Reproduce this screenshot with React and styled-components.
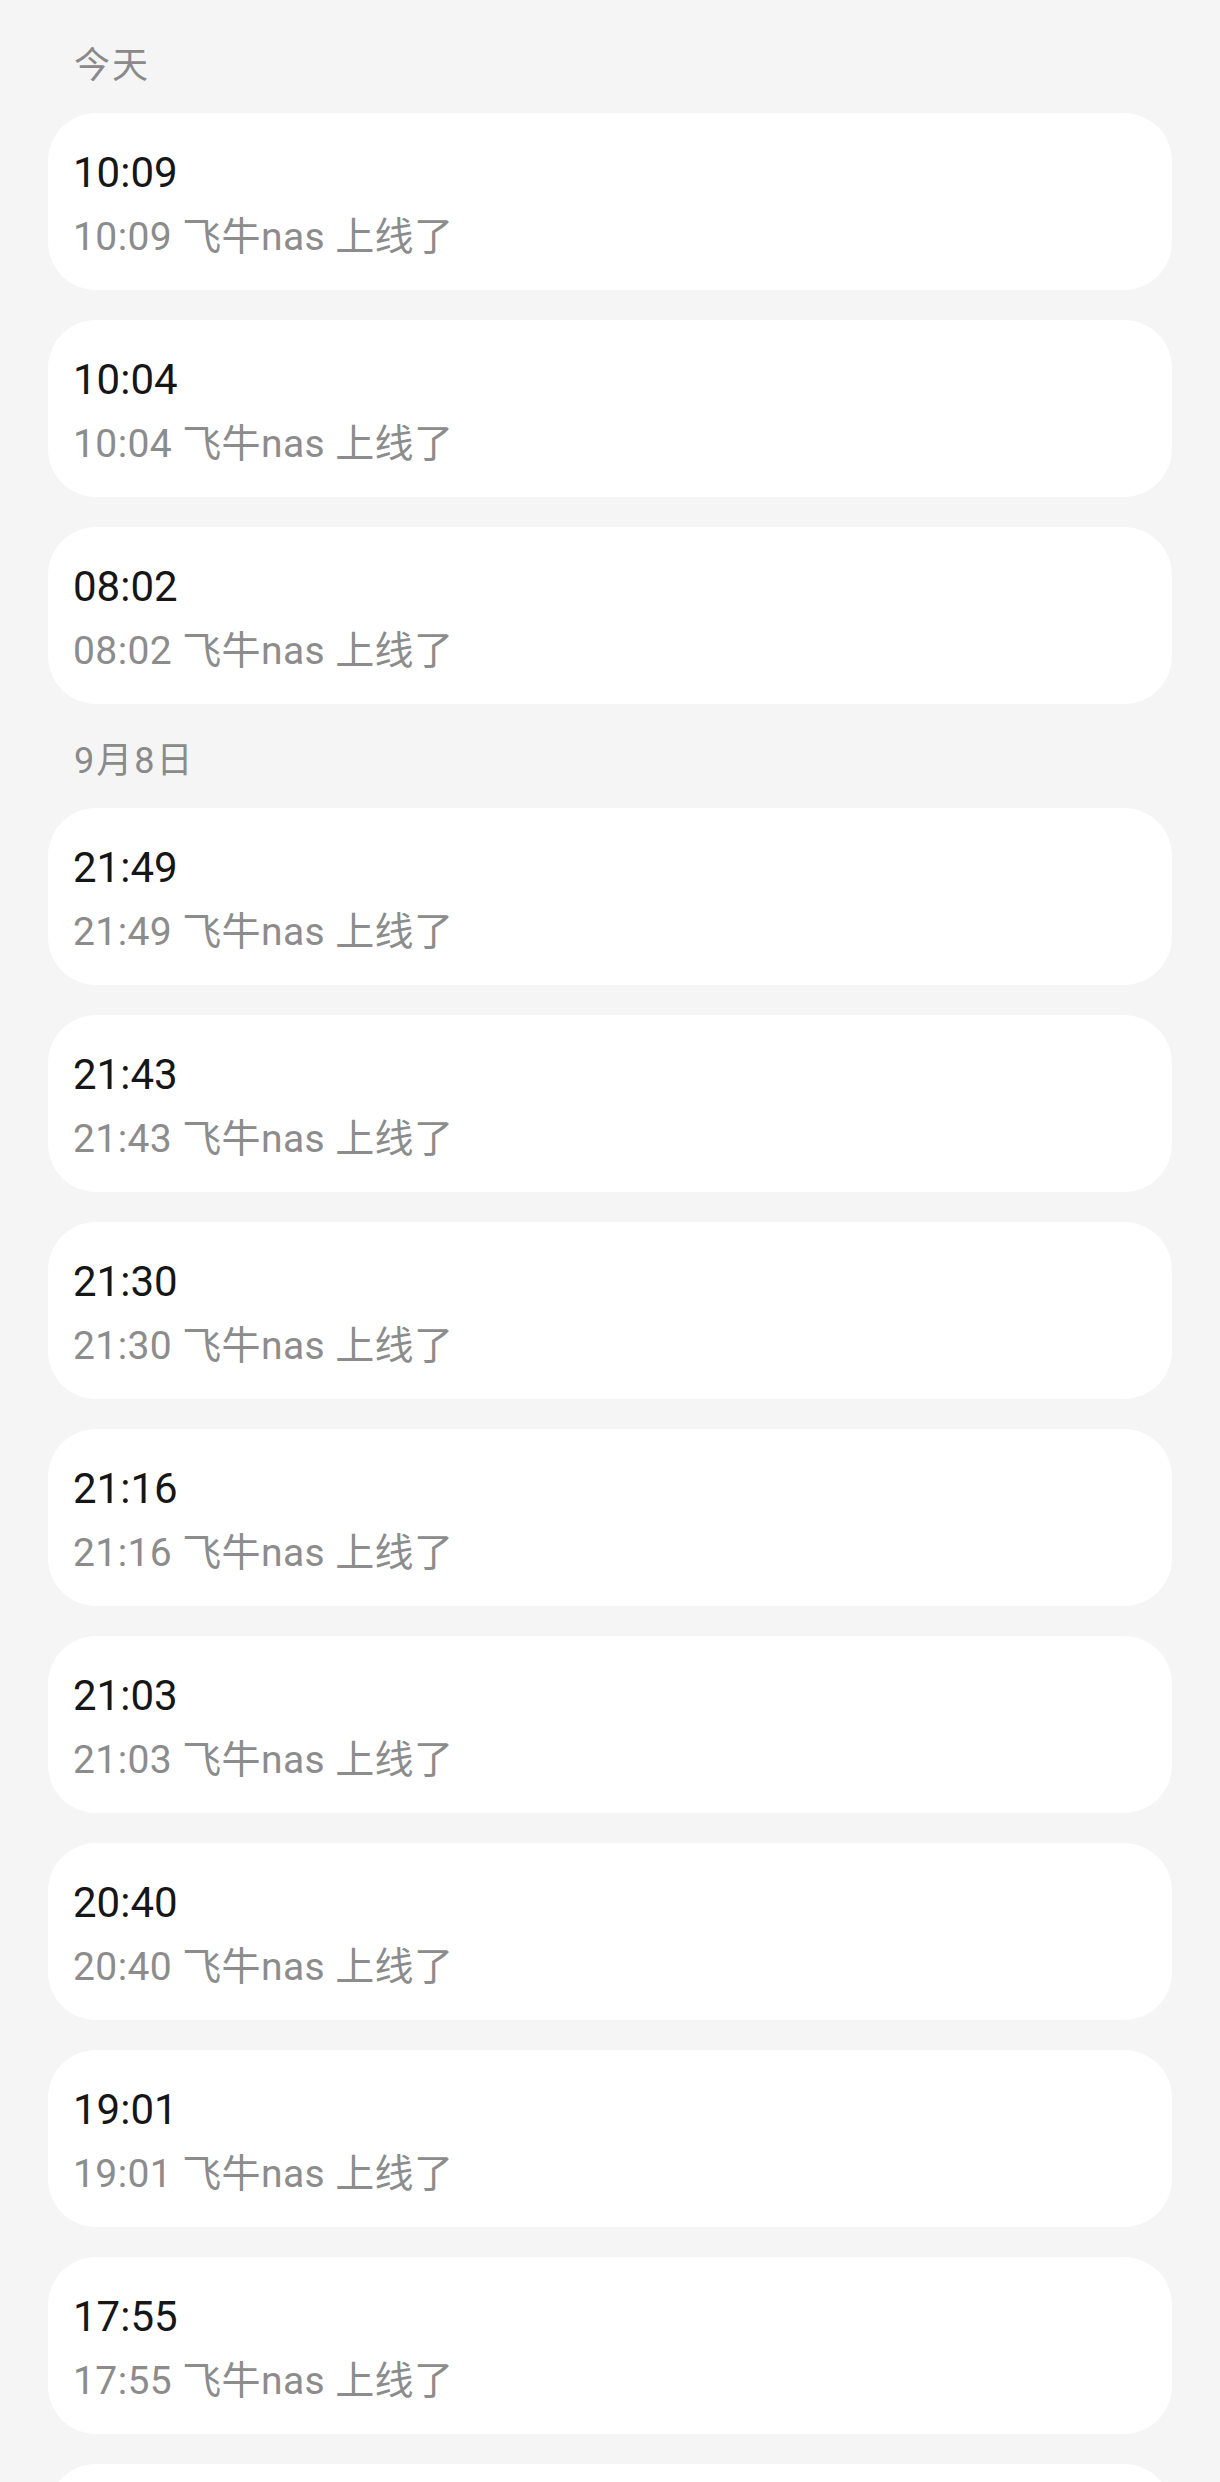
import React from 'react';
import styled, { createGlobalStyle } from 'styled-components';

const GlobalStyle = createGlobalStyle`
  html, body {
    margin: 0;
    padding: 0;
    background: #f5f5f5;
  }
  body {
    font-family: Roboto, "Noto Sans CJK SC", sans-serif;
    -webkit-font-smoothing: antialiased;
  }
`;

const Page = styled.div`
  padding: 9px 48px 0;
  background: #f5f5f5;
  min-height: 2482px;
  box-sizing: border-box;
`;

const Section = styled.section`
  display: flex;
  flex-direction: column;
`;

const DayLabel = styled.div`
  padding: 37px 0 0 26px;
  margin-bottom: 27px;
  font-size: 36px;
  line-height: 40px;
  letter-spacing: 2px;
  color: #8a8a8a;
`;

const CardList = styled.div`
  display: flex;
  flex-direction: column;
  gap: 30px;
`;

const Card = styled.div`
  background: #ffffff;
  border-radius: 48px;
  padding: 35px 25px 30px;
  height: 177px;
  box-sizing: border-box;
`;

const Title = styled.div`
  font-size: 42px;
  line-height: 50px;
  color: #161616;
`;

const Message = styled.div`
  margin-top: 16px;
  font-size: 39px;
  line-height: 46px;
  letter-spacing: 0.4px;
  color: #8c8c8c;
  white-space: nowrap;
`;

const groups = [
  { day: '今天', times: ['10:09', '10:04', '08:02'] },
  {
    day: '9月8日',
    times: ['21:49', '21:43', '21:30', '21:16', '21:03', '20:40', '19:01', '17:55', '17:32'],
  },
];

const NoticeCard = ({ time }) => (
  <Card>
    <Title>{time}</Title>
    <Message>{time} 飞牛nas 上线了</Message>
  </Card>
);

export default function App() {
  return (
    <>
      <GlobalStyle />
      <Page>
        {groups.map(g => (
          <Section key={g.day}>
            <DayLabel>{g.day}</DayLabel>
            <CardList>
              {g.times.map(t => (
                <NoticeCard key={t} time={t} />
              ))}
            </CardList>
          </Section>
        ))}
      </Page>
    </>
  );
}
